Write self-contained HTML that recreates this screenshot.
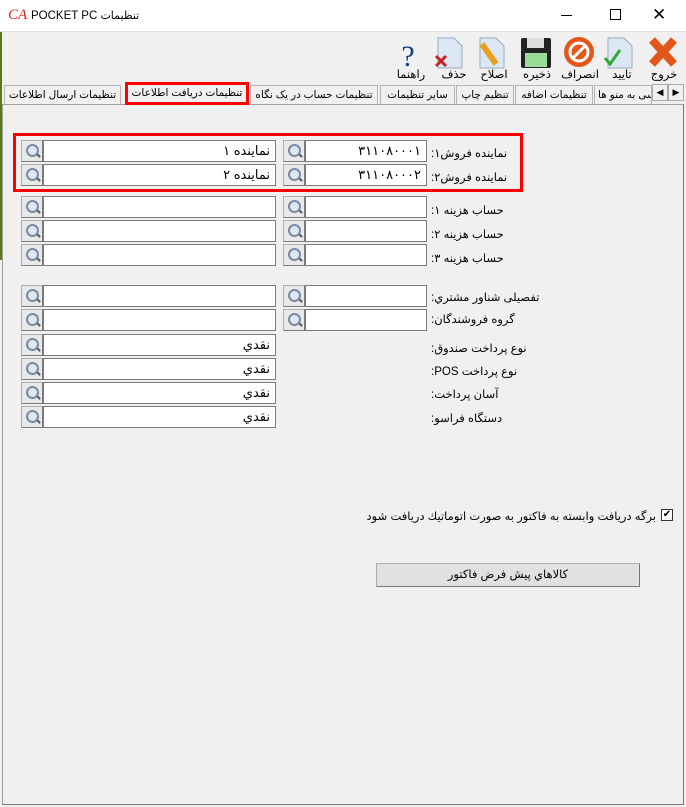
<!DOCTYPE html>
<html><head><meta charset="utf-8"><style>
*{box-sizing:border-box;margin:0;padding:0}
body{width:686px;height:807px;background:#f0f0f0;font-family:"Liberation Sans","DejaVu Sans",sans-serif;font-size:12px;position:relative;overflow:hidden;color:#000}
.a{position:absolute}
.title{left:0;top:0;width:686px;height:31px;background:#fff}
.inp{position:absolute;height:22px;background:#fff;border:1px solid #7a7a7a;direction:rtl;padding:0 5px;line-height:20px;font-size:13px;font-family:"Liberation Sans","DejaVu Sans",sans-serif}
.btn{position:absolute;width:22px;height:22px;background:#e9e9e9;border:1px solid #adadad;border-right-color:#7a7a7a;border-bottom-color:#7a7a7a}
.lbl{position:absolute;left:431px;direction:rtl;white-space:nowrap;font-size:11.5px}
.tab{position:absolute;top:85px;height:20px;border:1px solid #b5b5b5;border-bottom:none;background:#f0f0f0;direction:rtl;text-align:center;line-height:18px;font-size:10.5px;white-space:nowrap;overflow:hidden}
.tl{position:absolute;top:67px;font-size:11.5px;direction:rtl;text-align:center;width:40px}
</style></head><body>
<div class="a" style="left:0;top:0;width:2px;height:260px;background:#5a7a1a"></div>
<div class="a title"></div>
<div class="a" style="left:8px;top:7px;color:#d22;font-size:15px;font-style:italic;font-family:'Liberation Serif',serif">CA</div>
<div class="a" style="left:31px;top:9px;font-size:11.5px">POCKET PC <span style="font-family:'DejaVu Sans',sans-serif;font-size:11px">تنظیمات</span></div>
<div class="a" style="left:561px;top:15px;width:11px;height:1px;background:#000"></div>
<div class="a" style="left:610px;top:9px;width:11px;height:11px;border:1px solid #000"></div>
<div class="a" style="left:652px;top:5px;font-size:17px;font-family:'DejaVu Sans'">✕</div>
<div class="a" style="left:0;top:31px;width:686px;height:1px;background:#ddd"></div>

<svg class="a" style="left:390px;top:34px" width="296" height="36">
<text x="18" y="32" font-size="30" fill="#1a3a8a" text-anchor="middle" font-family="Liberation Serif">?</text>
<path d="M48 4h16l8 8v22h-24z" fill="#dbe7f5" stroke="#9ab"/><path d="M46 22l10 10M56 22l-10 10" stroke="#c22" stroke-width="3"/>
<path d="M90 4h16l8 8v22h-24z" fill="#dbe7f5" stroke="#9ab"/><path d="M92 10l14 20" stroke="#e8a020" stroke-width="6"/>
<rect x="131" y="4" width="30" height="30" rx="2" fill="#222"/><rect x="137" y="4" width="17" height="10" fill="#ddd"/><rect x="135" y="19" width="22" height="14" fill="#9d9"/>
<circle cx="189" cy="18" r="15" fill="#e2561a"/><circle cx="189" cy="18" r="9" fill="none" stroke="#fff" stroke-width="3"/><path d="M182 25l14-14" stroke="#fff" stroke-width="3"/>
<path d="M218 4h16l8 8v22h-24z" fill="#dbe7f5" stroke="#9ab"/><path d="M215 24l5 6 10-14" stroke="#3a3" stroke-width="3" fill="none"/>
<path d="M262 6l22 24M284 6l-22 24" stroke="#e2561a" stroke-width="8"/>
</svg>
<div class="tl" style="left:391px">راهنما</div>
<div class="tl" style="left:434px">حذف</div>
<div class="tl" style="left:474px">اصلاح</div>
<div class="tl" style="left:517px">ذخیره</div>
<div class="tl" style="left:560px">انصراف</div>
<div class="tl" style="left:602px">تایید</div>
<div class="tl" style="left:644px">خروج</div>

<div class="tab" style="left:4px;width:117px">تنظیمات ارسال اطلاعات</div>
<div class="tab" style="left:250px;width:128px">تنظیمات حساب در یک نگاه</div>
<div class="tab" style="left:380px;width:75px">سایر تنظیمات</div>
<div class="tab" style="left:456px;width:58px">تنظیم چاپ</div>
<div class="tab" style="left:515px;width:78px">تنظیمات اضافه</div>
<div class="tab" style="left:594px;width:58px"><span style="position:absolute;left:3px;top:0">تنظیمات دسترسی به منو ها</span></div>
<div class="a" style="left:652px;top:84px;width:16px;height:17px;background:#f0f0f0;border:1px solid #aaa;font-size:9px;text-align:center;line-height:15px">◀</div>
<div class="a" style="left:668px;top:84px;width:16px;height:17px;background:#f0f0f0;border:1px solid #aaa;font-size:9px;text-align:center;line-height:15px">▶</div>
<div class="a" style="left:2px;top:104px;width:682px;height:701px;border:1px solid #a0a0a0;border-right-color:#777;border-bottom-color:#777;background:#f0f0f0"></div>
<div class="tab" style="left:125px;top:82px;width:124px;height:23px;border:3px solid #f00;background:#f0f0f0;line-height:16px">تنظیمات دریافت اطلاعات</div>

<div class="a" style="left:13px;top:133px;width:510px;height:59px;border:3px solid #f00"></div>

<div class="btn" style="left:21px;top:140px"></div><div class="inp" style="left:43px;top:140px;width:233px">نماینده ۱</div>
<div class="btn" style="left:283px;top:140px"></div><div class="inp" style="left:305px;top:140px;width:122px">۳۱۱۰۸۰۰۰۱</div>
<div class="lbl" style="top:146px">نماینده فروش۱:</div>
<div class="btn" style="left:21px;top:164px"></div><div class="inp" style="left:43px;top:164px;width:233px">نماینده ۲</div>
<div class="btn" style="left:283px;top:164px"></div><div class="inp" style="left:305px;top:164px;width:122px">۳۱۱۰۸۰۰۰۲</div>
<div class="lbl" style="top:170px">نماینده فروش۲:</div>

<div class="btn" style="left:21px;top:196px"></div><div class="inp" style="left:43px;top:196px;width:233px"></div>
<div class="btn" style="left:283px;top:196px"></div><div class="inp" style="left:305px;top:196px;width:122px"></div>
<div class="lbl" style="top:203px">حساب هزینه ۱:</div>
<div class="btn" style="left:21px;top:220px"></div><div class="inp" style="left:43px;top:220px;width:233px"></div>
<div class="btn" style="left:283px;top:220px"></div><div class="inp" style="left:305px;top:220px;width:122px"></div>
<div class="lbl" style="top:227px">حساب هزینه ۲:</div>
<div class="btn" style="left:21px;top:244px"></div><div class="inp" style="left:43px;top:244px;width:233px"></div>
<div class="btn" style="left:283px;top:244px"></div><div class="inp" style="left:305px;top:244px;width:122px"></div>
<div class="lbl" style="top:251px">حساب هزینه ۳:</div>

<div class="btn" style="left:21px;top:285px"></div><div class="inp" style="left:43px;top:285px;width:233px"></div>
<div class="btn" style="left:283px;top:285px"></div><div class="inp" style="left:305px;top:285px;width:122px"></div>
<div class="lbl" style="top:290px">تفصیلی شناور مشتري:</div>
<div class="btn" style="left:21px;top:309px"></div><div class="inp" style="left:43px;top:309px;width:233px"></div>
<div class="btn" style="left:283px;top:309px"></div><div class="inp" style="left:305px;top:309px;width:122px"></div>
<div class="lbl" style="top:312px">گروه فروشندگان:</div>

<div class="btn" style="left:21px;top:334px"></div><div class="inp" style="left:43px;top:334px;width:233px">نقدي</div>
<div class="lbl" style="top:341px">نوع پرداخت صندوق:</div>
<div class="btn" style="left:21px;top:358px"></div><div class="inp" style="left:43px;top:358px;width:233px">نقدي</div>
<div class="lbl" style="top:364px">نوع پرداخت POS:</div>
<div class="btn" style="left:21px;top:382px"></div><div class="inp" style="left:43px;top:382px;width:233px">نقدي</div>
<div class="lbl" style="top:387px">آسان پرداخت:</div>
<div class="btn" style="left:21px;top:406px"></div><div class="inp" style="left:43px;top:406px;width:233px">نقدي</div>
<div class="lbl" style="top:411px">دستگاه فراسو:</div>

<div class="a" style="left:661px;top:509px;width:12px;height:12px;border:1px solid #333;background:#fff;font-size:10px;line-height:10px;text-align:center">✔</div>
<div class="a" style="left:386px;top:509px;width:270px;direction:rtl;font-size:11.5px;white-space:nowrap">برگه دریافت وابسته به فاکتور به صورت اتوماتیك دریافت شود</div>

<div class="a" style="left:376px;top:563px;width:264px;height:24px;background:#e1e1e1;border:1px solid #adadad;border-right-color:#777;border-bottom-color:#777;text-align:center;line-height:22px;direction:rtl;font-size:11.5px">كالاهاي پيش فرض فاكتور</div>

<style>.btn::after{content:"";position:absolute;left:4px;top:3px;width:9px;height:9px;border:2px solid #7a8aa0;border-radius:50%;background:#dde8f5}.btn::before{content:"";position:absolute;left:13px;top:13px;width:6px;height:2px;background:#556;transform:rotate(45deg)}</style>
</body></html>
